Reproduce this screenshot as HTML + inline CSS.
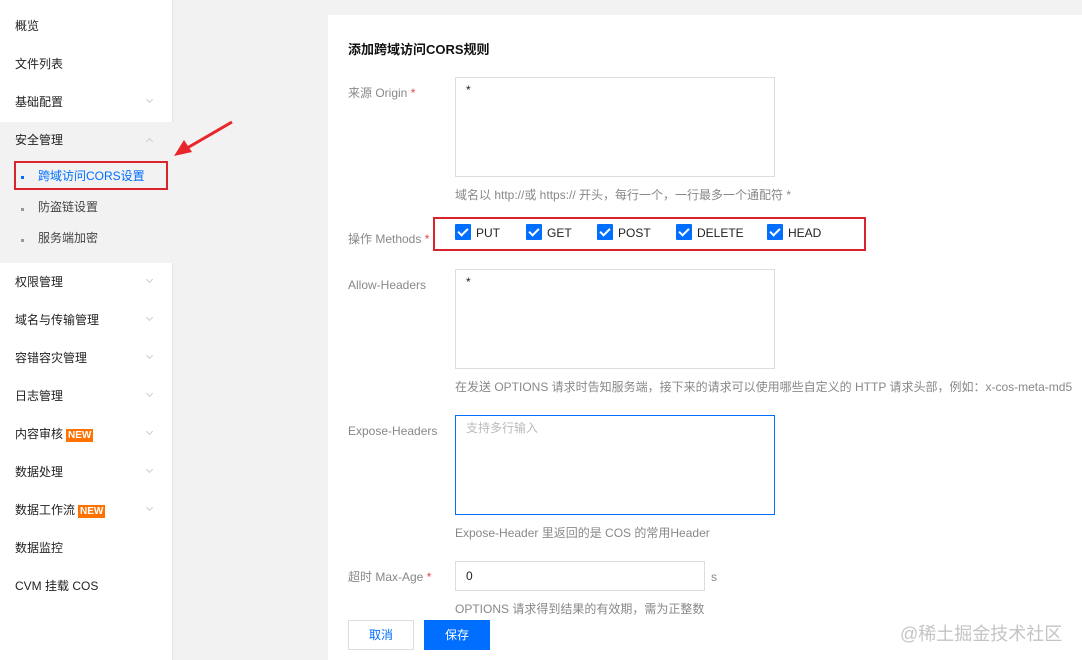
<!DOCTYPE html>
<html><head><meta charset="utf-8"><style>
*{margin:0;padding:0;box-sizing:border-box}
body{width:1082px;height:660px;overflow:hidden;background:#f2f2f2;font-family:"Liberation Sans","Noto Sans CJK SC",sans-serif;font-size:12px;color:#222;position:relative}
.a{position:absolute;white-space:nowrap}
#side{position:absolute;left:0;top:0;width:173px;height:660px;background:#fff;border-right:1px solid #e2e2e2}
.it{position:absolute;left:15px;line-height:16px;transform:translateY(-7px)}
.chev{position:absolute;left:147px;width:5px;height:5px;border-right:1px solid #ccc;border-bottom:1px solid #ccc;transform:rotate(45deg)}
.up{transform:rotate(225deg)}
.new{background:#ff7200;color:#fff;font-size:10px;font-weight:bold;padding:0 2px;margin-left:3px;line-height:13px;display:inline-block}
.dot{position:absolute;left:21px;width:3px;height:3px;background:#999}
#panel{position:absolute;left:328px;top:15px;width:754px;height:645px;background:#fff}
.lbl{position:absolute;left:348px;color:#888;line-height:16px}
.star{color:#e54545}
.ta{position:absolute;left:455px;width:320px;border:1px solid #ddd;background:#fff;padding:5px 10px;line-height:14px}
.hint{position:absolute;left:455px;color:#888;line-height:16px}
.cb{position:absolute;top:224px;width:16px;height:16px;background:#006eff;border-radius:1px}
.cb:after{content:"";position:absolute;left:5px;top:2px;width:4px;height:8px;border-right:2px solid #fff;border-bottom:2px solid #fff;transform:rotate(45deg)}
.ml{position:absolute;top:225px;line-height:16px;color:#222}
</style></head><body>
<div id="side">
<div style="position:absolute;left:0;top:122px;width:173px;height:141px;background:#f2f2f2"></div>
<div class="it" style="top:25px">概览</div>
<div class="it" style="top:63px">文件列表</div>
<div class="it" style="top:101px">基础配置</div><div class="chev" style="top:97px"></div>
<div class="it" style="top:139px">安全管理</div><div class="chev up" style="top:139px"></div>
<div class="dot" style="left:21px;top:176px;background:#006eff"></div>
<div class="it" style="left:38px;top:175px;color:#006eff">跨域访问CORS设置</div>
<div style="position:absolute;left:14px;top:161px;width:154px;height:29px;border:2px solid #d9232f"></div>
<div class="dot" style="top:208px"></div><div class="it" style="left:38px;top:206px;color:#444">防盗链设置</div>
<div class="dot" style="top:239px"></div><div class="it" style="left:38px;top:237px;color:#444">服务端加密</div>
<div class="it" style="top:281px">权限管理</div><div class="chev" style="top:277px"></div>
<div class="it" style="top:319px">域名与传输管理</div><div class="chev" style="top:315px"></div>
<div class="it" style="top:357px">容错容灾管理</div><div class="chev" style="top:353px"></div>
<div class="it" style="top:395px">日志管理</div><div class="chev" style="top:391px"></div>
<div class="it" style="top:433px">内容审核<span class="new">NEW</span></div><div class="chev" style="top:429px"></div>
<div class="it" style="top:471px">数据处理</div><div class="chev" style="top:467px"></div>
<div class="it" style="top:509px">数据工作流<span class="new">NEW</span></div><div class="chev" style="top:505px"></div>
<div class="it" style="top:547px">数据监控</div>
<div class="it" style="top:585px">CVM 挂载 COS</div>
</div>
<svg class="a" style="left:170px;top:118px" width="66" height="42"><line x1="62" y1="4" x2="12" y2="33" stroke="#e8262b" stroke-width="3"/><polygon points="4,38 14,22 22,34" fill="#e8262b"/></svg>
<div id="panel"></div>
<div class="a" style="left:348px;top:39px;font-size:13px;font-weight:bold;color:#111">添加跨域访问CORS规则</div>
<div class="lbl" style="top:85px">来源 Origin <span class="star">*</span></div>
<div class="ta" style="top:77px;height:100px">*</div>
<div class="hint" style="top:187px">域名以 http://或 https:// 开头，每行一个，一行最多一个通配符 *</div>
<div class="lbl" style="top:231px">操作 Methods <span class="star">*</span></div>
<div style="position:absolute;left:433px;top:217px;width:433px;height:34px;border:2px solid #d9232f"></div>
<div class="cb" style="left:455px"></div><div class="ml" style="left:476px">PUT</div>
<div class="cb" style="left:526px"></div><div class="ml" style="left:547px">GET</div>
<div class="cb" style="left:597px"></div><div class="ml" style="left:618px">POST</div>
<div class="cb" style="left:676px"></div><div class="ml" style="left:697px">DELETE</div>
<div class="cb" style="left:767px"></div><div class="ml" style="left:788px">HEAD</div>
<div class="lbl" style="top:277px">Allow-Headers</div>
<div class="ta" style="top:269px;height:100px">*</div>
<div class="hint" style="top:379px">在发送 OPTIONS 请求时告知服务端，接下来的请求可以使用哪些自定义的 HTTP 请求头部，例如：x-cos-meta-md5</div>
<div class="lbl" style="top:423px">Expose-Headers</div>
<div class="ta" style="top:415px;height:100px;border-color:#006eff;color:#bbb">支持多行输入</div>
<div class="hint" style="top:525px">Expose-Header 里返回的是 COS 的常用Header</div>
<div class="lbl" style="top:569px">超时 Max-Age <span class="star">*</span></div>
<div class="ta" style="top:561px;height:30px;width:250px;line-height:18px">0</div>
<div class="a" style="left:711px;top:570px;color:#888">s</div>
<div class="hint" style="top:601px">OPTIONS 请求得到结果的有效期，需为正整数</div>
<div class="a" style="left:348px;top:620px;width:66px;height:30px;border:1px solid #ddd;background:#fff;color:#006eff;text-align:center;line-height:28px">取消</div>
<div class="a" style="left:424px;top:620px;width:66px;height:30px;background:#006eff;color:#fff;text-align:center;line-height:30px">保存</div>
<div class="a" style="left:900px;top:620px;font-size:18px;color:#c4c4c4">@稀土掘金技术社区</div>
</body></html>
